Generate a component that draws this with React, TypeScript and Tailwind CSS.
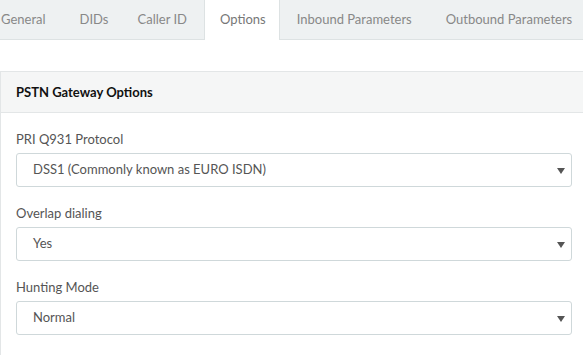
const tabs = [
  { name: "General", pad: "pl-[17px] pr-[17px]" },
  { name: "DIDs", pad: "pl-[17px] pr-[12px]" },
  { name: "Caller ID", pad: "pl-[17px] pr-[17px]" },
  { name: "Options", pad: "pl-[15px] pr-[13px]" },
  { name: "Inbound Parameters", pad: "pl-[17px] pr-[17px]" },
  { name: "Outbound Parameters", pad: "pl-[17px] pr-[17px]" },
];

const fields = [
  { label: "PRI Q931 Protocol", value: "DSS1 (Commonly known as EURO ISDN)" },
  { label: "Overlap dialing", value: "Yes" },
  { label: "Hunting Mode", value: "Normal" },
];

function Select({ value }: { value: string }) {
  return (
    <div className="relative flex h-[34px] items-center rounded-[3px] border border-[#cfd8da] bg-white pl-[16px] text-[13px] text-[#555]">
      {value}
      <span className="absolute right-[6px] top-[14px] h-0 w-0 border-x-[4px] border-t-[6px] border-x-transparent border-t-[#555]" />
    </div>
  );
}

export default function App() {
  return (
    <div className="h-[355px] w-[583px] overflow-hidden bg-white" style={{ fontFamily: "Lato, 'Open Sans', sans-serif" }}>
      <div className="flex h-[40px] border-b border-[#dde2e3] bg-[#eef1f2]">
        <div className="-ml-[16px] flex shrink-0 whitespace-nowrap">
          {tabs.map((t) => (
            <div
              key={t.name}
              className={
                t.name === "Options"
                  ? `-mb-px flex h-[40px] shrink-0 items-center border-x border-[#dde2e3] bg-white text-[13px] text-[#777] ${t.pad}`
                  : `flex h-[39px] shrink-0 items-center text-[13px] text-[#888] ${t.pad}`
              }
            >
              {t.name}
            </div>
          ))}
        </div>
      </div>

      <div className="mt-[31px] w-[600px] border border-[#e3e6e7]">
        <div className="flex h-[41px] items-center border-b border-[#e3e6e7] bg-[#f5f6f6] px-[15px] pt-[2px] text-[13px] font-bold text-[#111]">
          PSTN Gateway Options
        </div>
        <div className="flex w-[571px] flex-col gap-[16px] pb-[24px] pl-[15px] pt-[16px]">
          {fields.map((f) => (
            <div key={f.label}>
              <div className="mb-[4px] text-[13px] leading-[20px] text-[#555]">{f.label}</div>
              <Select value={f.value} />
            </div>
          ))}
        </div>
      </div>
    </div>
  );
}
